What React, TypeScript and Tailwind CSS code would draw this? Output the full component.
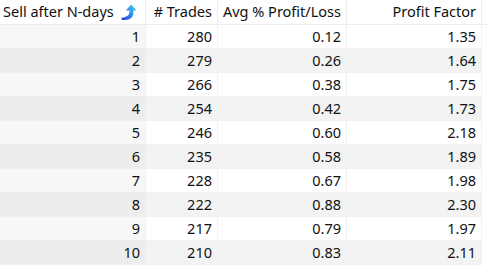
import React from "react";

const rows: [number, number, string, string][] = [
  [1, 280, "0.12", "1.35"],
  [2, 279, "0.26", "1.64"],
  [3, 266, "0.38", "1.75"],
  [4, 254, "0.42", "1.73"],
  [5, 246, "0.60", "2.18"],
  [6, 235, "0.58", "1.89"],
  [7, 228, "0.67", "1.98"],
  [8, 222, "0.88", "2.30"],
  [9, 217, "0.79", "1.97"],
  [10, 210, "0.83", "2.11"],
];

function SortIcon() {
  return (
    <svg width="17" height="17" viewBox="0 0 16 16">
      <defs>
        <linearGradient id="g" x1="0" y1="1" x2="1" y2="0">
          <stop offset="0" stopColor="#1d3fd6" />
          <stop offset="0.5" stopColor="#3a8cf0" />
          <stop offset="1" stopColor="#33e0e8" />
        </linearGradient>
      </defs>
      <path d="M10.5 0.5 L15.5 6 L12.6 6 L12.6 8.5 C12.6 12.5 9.5 15 5 15 L1.5 15 L1.5 12.8 C3.5 13 5 12.3 6.2 11.6 C8.3 10.5 8.9 9 8.9 7 L8.9 6 L5.5 6 Z" fill="url(#g)" />
    </svg>
  );
}

export default function App() {
  return (
    <div
      className="w-[489px] h-[269px] bg-white text-[14.5px] text-[#111] overflow-hidden"
      style={{ fontFamily: '"Noto Sans", "Open Sans", sans-serif' }}
    >
      <div className="grid grid-cols-[146px_72px_129px_135px_1fr]">
        <div className="h-[25px] border-b border-r border-[#ececec] flex items-center justify-between pl-[3px] pr-[8px]">
          <span>Sell after N-days</span>
          <SortIcon />
        </div>
        <div className="h-[25px] border-b border-r border-[#ececec] flex items-center justify-end pr-[5px]">
          # Trades
        </div>
        <div className="h-[25px] border-b border-r border-[#ececec] flex items-center justify-end pr-[5px]">
          Avg % Profit/Loss
        </div>
        <div className="h-[25px] border-b border-r border-[#ececec] flex items-center justify-end pr-[5px]">
          Profit Factor
        </div>
        <div className="h-[25px] border-b border-[#ececec]" />
        {rows.map(([n, t, a, p]) => {
          const even = n % 2 === 0;
          const first = even ? "bg-[#ededed]" : "bg-[#f7f7f7]";
          const cell = even ? "bg-[#f3f3f3]" : "bg-white";
          return (
            <React.Fragment key={n}>
              <div className={`h-[24px] border-b border-r border-[#f0f0f0] flex items-center justify-end pr-[5px] ${first}`}>
                {n}
              </div>
              <div className={`h-[24px] border-b border-r border-[#f0f0f0] flex items-center justify-end pr-[5px] ${cell}`}>
                {t}
              </div>
              <div className={`h-[24px] border-b border-r border-[#f0f0f0] flex items-center justify-end pr-[5px] ${cell}`}>
                {a}
              </div>
              <div className={`h-[24px] border-b border-r border-[#f0f0f0] flex items-center justify-end pr-[5px] ${cell}`}>
                {p}
              </div>
              <div className="h-[24px] bg-white" />
            </React.Fragment>
          );
        })}
      </div>
    </div>
  );
}
